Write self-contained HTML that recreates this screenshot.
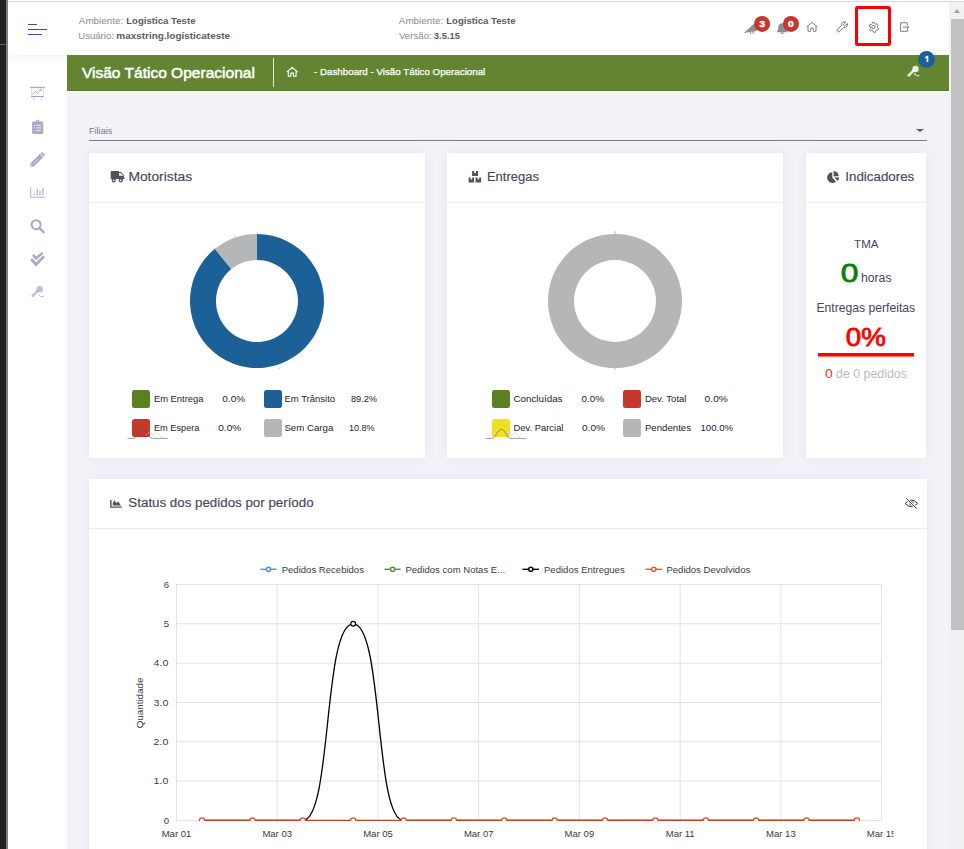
<!DOCTYPE html>
<html lang="pt-br">
<head>
<meta charset="utf-8">
<title>Visão Tático Operacional</title>
<style>
*{box-sizing:border-box;margin:0;padding:0}
html,body{width:964px;height:849px;overflow:hidden;background:#f2f3f8;font-family:"Liberation Sans",sans-serif;color:#48465b}
.abs{position:absolute}
.t{position:absolute;white-space:pre;line-height:1}
#leftstrip{left:0;top:0;width:6px;height:849px;background:#202124}
#leftline{left:6px;top:0;width:2px;height:849px;background:#7d7d7d}
#leftmark{left:0;top:44px;width:6px;height:1px;background:#5f6368}
#topline{left:8px;top:1px;width:956px;height:1px;background:#d9d9d9}
#header{left:8px;top:2px;width:941px;height:53px;background:#fff;box-shadow:0 0 12px rgba(82,63,105,.10)}
#sidebar{left:8px;top:55px;width:59px;height:794px;background:#fff}
#titlebar{left:67px;top:55px;width:882px;height:36px;background:#638532;border-bottom:1px solid #587a2b}
#titleline{left:67px;top:91px;width:882px;height:1px;background:#fafafc}
#toprow{left:8px;top:0;width:956px;height:1px;background:#fff}
#scrolltrack{left:949px;top:2px;width:15px;height:847px;background:#f1f1f1}
#scrollthumb{left:951px;top:19px;width:13px;height:611px;background:#c1c1c1}
.card{position:absolute;background:#fff;box-shadow:0 0 13px rgba(82,63,105,.07)}
.hr{position:absolute;height:1px;background:#ebedf2}
.sw{position:absolute;width:18px;height:18px;border-radius:2.5px}
.lg{position:absolute;white-space:pre;line-height:1;font-size:9.5px;color:#3a3a3a}
</style>
</head>
<body>
<div class="abs" id="sidebar"></div>
<div class="abs" id="header"></div>
<div class="abs" id="topline"></div>
<div class="abs" id="leftstrip"></div>
<div class="abs" id="leftline"></div>
<div class="abs" id="leftmark"></div>
<div class="abs" id="titlebar"></div>
<div class="abs" id="titleline"></div>
<div class="abs" id="toprow"></div>
<div class="abs" id="scrolltrack"></div>
<div class="abs" id="scrollthumb"></div>
<div class="abs" style="left:953.8px;top:8.7px;width:0;height:0;border-left:3.8px solid transparent;border-right:3.8px solid transparent;border-bottom:4.4px solid #a0a0a0"></div>

<!-- hamburger -->
<div class="abs" style="left:28px;top:24px;width:9px;height:1px;background:#3050a9"></div>
<div class="abs" style="left:28px;top:29px;width:19px;height:1px;background:#3050a9"></div>
<div class="abs" style="left:28px;top:34px;width:14px;height:1px;background:#3050a9"></div>

<!-- header texts -->

<!-- title bar -->
<div class="abs" style="left:273px;top:58px;width:1px;height:29px;background:#e4ead8"></div>

<!-- filiais -->
<div class="abs" style="left:89px;top:140px;width:838px;height:1px;background:#7e7e7e"></div>
<div class="abs" style="left:916px;top:129px;width:0;height:0;border-left:4px solid transparent;border-right:4px solid transparent;border-top:3.6px solid #5a5a5a"></div>

<!-- cards -->
<div class="card" style="left:89px;top:153px;width:336px;height:305px"></div>
<div class="card" style="left:447px;top:153px;width:336px;height:305px"></div>
<div class="card" style="left:806px;top:153px;width:120px;height:305px"></div>
<div class="card" style="left:89px;top:479px;width:838px;height:380px"></div>
<div class="hr" style="left:89px;top:202px;width:336px"></div>
<div class="hr" style="left:447px;top:202px;width:336px"></div>
<div class="hr" style="left:806px;top:202px;width:120px"></div>
<div class="hr" style="left:89px;top:528px;width:838px"></div>



<svg class="abs" style="left:0;top:0" width="964" height="849" viewBox="0 0 964 849" font-family="Liberation Sans, sans-serif">
  <text x="78.80" y="23.80" font-size="9.9" fill="#8c8c8c" textLength="44.50" lengthAdjust="spacingAndGlyphs">Ambiente:</text>
  <text x="126.21" y="23.80" font-size="9.8" fill="#5c5c5c" font-weight="bold" textLength="69.28" lengthAdjust="spacingAndGlyphs">Logistica Teste</text>
  <text x="78.30" y="38.90" font-size="9.9" fill="#8c8c8c" textLength="35.59" lengthAdjust="spacingAndGlyphs">Usuário:</text>
  <text x="116.31" y="38.90" font-size="9.8" fill="#5c5c5c" font-weight="bold" textLength="113.78" lengthAdjust="spacingAndGlyphs">maxstring.logisticateste</text>
  <text x="398.80" y="23.80" font-size="9.9" fill="#8c8c8c" textLength="44.50" lengthAdjust="spacingAndGlyphs">Ambiente:</text>
  <text x="446.21" y="23.80" font-size="9.8" fill="#5c5c5c" font-weight="bold" textLength="69.28" lengthAdjust="spacingAndGlyphs">Logistica Teste</text>
  <text x="398.90" y="38.90" font-size="9.9" fill="#8c8c8c" textLength="32.90" lengthAdjust="spacingAndGlyphs">Versão:</text>
  <text x="433.81" y="38.90" font-size="9.8" fill="#5c5c5c" font-weight="bold" textLength="26.18" lengthAdjust="spacingAndGlyphs">3.5.15</text>
  <text x="81.90" y="77.90" font-size="15" fill="#fff" stroke="#fff" stroke-width="0.5" textLength="173.00" lengthAdjust="spacingAndGlyphs">Visão Tático Operacional</text>
  <text x="314.02" y="75.20" font-size="9.6" fill="#fff" stroke="#fff" stroke-width="0.25" textLength="171.27" lengthAdjust="spacingAndGlyphs">- Dashboard - Visão Tático Operacional</text>
  <text x="89.03" y="134.00" font-size="9.4" fill="#7c7c86" textLength="23.25" lengthAdjust="spacingAndGlyphs">Filiais</text>
  <text x="128.43" y="180.60" font-size="12.5" fill="#48465b" stroke="#48465b" stroke-width="0.15" textLength="63.65" lengthAdjust="spacingAndGlyphs">Motoristas</text>
  <text x="486.98" y="180.60" font-size="12.5" fill="#48465b" stroke="#48465b" stroke-width="0.15" textLength="51.90" lengthAdjust="spacingAndGlyphs">Entregas</text>
  <text x="845.27" y="180.60" font-size="12.5" fill="#48465b" stroke="#48465b" stroke-width="0.15" textLength="69.00" lengthAdjust="spacingAndGlyphs">Indicadores</text>
  <text x="128.38" y="506.60" font-size="12.5" fill="#48465b" stroke="#48465b" stroke-width="0.15" textLength="185.20" lengthAdjust="spacingAndGlyphs">Status dos pedidos por período</text>
  <text x="153.93" y="402.00" font-size="9.4" fill="#23232f" textLength="49.55" lengthAdjust="spacingAndGlyphs">Em Entrega</text>
  <text x="222.33" y="402.00" font-size="9.4" fill="#23232f" textLength="22.75" lengthAdjust="spacingAndGlyphs">0.0%</text>
  <text x="284.43" y="402.00" font-size="9.4" fill="#23232f" textLength="50.65" lengthAdjust="spacingAndGlyphs">Em Trânsito</text>
  <text x="350.93" y="402.00" font-size="9.4" fill="#23232f" textLength="26.15" lengthAdjust="spacingAndGlyphs">89.2%</text>
  <text x="153.93" y="430.90" font-size="9.4" fill="#23232f" textLength="45.55" lengthAdjust="spacingAndGlyphs">Em Espera</text>
  <text x="218.23" y="430.90" font-size="9.4" fill="#23232f" textLength="23.05" lengthAdjust="spacingAndGlyphs">0.0%</text>
  <text x="284.43" y="430.90" font-size="9.4" fill="#23232f" textLength="48.85" lengthAdjust="spacingAndGlyphs">Sem Carga</text>
  <text x="348.93" y="430.90" font-size="9.4" fill="#23232f" textLength="25.75" lengthAdjust="spacingAndGlyphs">10.8%</text>
  <text x="513.53" y="402.00" font-size="9.4" fill="#23232f" textLength="48.95" lengthAdjust="spacingAndGlyphs">Concluídas</text>
  <text x="581.43" y="402.00" font-size="9.4" fill="#23232f" textLength="22.55" lengthAdjust="spacingAndGlyphs">0.0%</text>
  <text x="644.93" y="402.00" font-size="9.4" fill="#23232f" textLength="41.55" lengthAdjust="spacingAndGlyphs">Dev. Total</text>
  <text x="704.63" y="402.00" font-size="9.4" fill="#23232f" textLength="23.25" lengthAdjust="spacingAndGlyphs">0.0%</text>
  <text x="513.53" y="430.90" font-size="9.4" fill="#23232f" textLength="49.95" lengthAdjust="spacingAndGlyphs">Dev. Parcial</text>
  <text x="582.03" y="430.90" font-size="9.4" fill="#23232f" textLength="23.05" lengthAdjust="spacingAndGlyphs">0.0%</text>
  <text x="644.93" y="430.90" font-size="9.4" fill="#23232f" textLength="46.15" lengthAdjust="spacingAndGlyphs">Pendentes</text>
  <text x="700.43" y="430.90" font-size="9.4" fill="#23232f" textLength="32.65" lengthAdjust="spacingAndGlyphs">100.0%</text>
  <text x="854.07" y="247.90" font-size="11.5" fill="#48465b" textLength="24.43" lengthAdjust="spacingAndGlyphs">TMA</text>
  <text x="840.71" y="282.00" font-size="25.5" fill="#0b7d0b" stroke="#0b7d0b" stroke-width="0.8" textLength="17.68" lengthAdjust="spacingAndGlyphs">0</text>
  <text x="860.88" y="282.00" font-size="12.3" fill="#48465b" textLength="30.68" lengthAdjust="spacingAndGlyphs">horas</text>
  <text x="816.39" y="312.10" font-size="12.2" fill="#48465b" textLength="98.78" lengthAdjust="spacingAndGlyphs">Entregas perfeitas</text>
  <text x="845.81" y="346.00" font-size="25.5" fill="#f00" stroke="#f00" stroke-width="0.8" textLength="40.07" lengthAdjust="spacingAndGlyphs">0%</text>
  <text x="825.10" y="377.80" font-size="12" fill="#f33" textLength="7.76" lengthAdjust="spacingAndGlyphs">0</text>
  <text x="836.00" y="377.80" font-size="12" fill="#b9b9c6" textLength="70.86" lengthAdjust="spacingAndGlyphs">de 0 pedidos</text>
</svg>

<!-- donuts -->
<svg class="abs" style="left:0;top:0" width="964" height="849" viewBox="0 0 964 849">
  <path d="M257.00 234.00A67 67 0 1 1 214.94 248.84L231.26 269.08A41 41 0 1 0 257.00 260.00Z" fill="#1b6096"/>
  <path d="M214.94 248.84A67 67 0 0 1 257.00 234.00L257.00 260.00A41 41 0 0 0 231.26 269.08Z" fill="#b5b6b7"/>
  <path d="M615 234a67 67 0 1 1 -0.01 0ZM615 260a41 41 0 1 0 0.01 0Z" fill="#b5b6b7" fill-rule="evenodd"/>
  <path d="M615 231v3M615 368v2" stroke="#888" stroke-width=".6" fill="none"/>
  <path d="M257 232v2M213.7 247.3l1.2 1.5M234.5 235.5l.6 1.8M279 367.5l.5 1.8" stroke="#aaa" stroke-width=".6" fill="none"/>
</svg>

<!-- legend card 1 -->
<div class="sw" style="left:132px;top:390px;background:#5a801f"></div>
<div class="sw" style="left:263.5px;top:390px;background:#1b6096"></div>
<div class="sw" style="left:132px;top:419px;background:#c5392d"></div>
<div class="sw" style="left:263.5px;top:419px;background:#b5b6b7"></div>

<!-- legend card 2 -->
<div class="sw" style="left:492px;top:390px;background:#5a801f"></div>
<div class="sw" style="left:623.3px;top:390px;background:#c5392d"></div>
<div class="sw" style="left:492px;top:419px;background:#f0e022"></div>
<div class="sw" style="left:623.3px;top:419px;background:#b5b6b7"></div>

<!-- indicadores -->
<div class="abs" style="left:818px;top:353px;width:96px;height:3px;background:#f00;box-shadow:0 1px 0 rgba(255,40,40,.55),0 2px 1px rgba(0,0,0,.12)"></div>


<!-- chart -->
<svg class="abs" style="left:0;top:0" width="964" height="849" viewBox="0 0 964 849" font-family="Liberation Sans, sans-serif" font-size="9.5" fill="#373d3f">
  <defs><clipPath id="cp"><rect x="170" y="578" width="716" height="243"/></clipPath><clipPath id="cx"><rect x="100" y="822" width="793.5" height="27"/></clipPath></defs>
  <path d="M176.5 584V821M277.2 584V821M378.0 584V821M478.7 584V821M579.4 584V821M680.2 584V821M780.9 584V821M881.6 584V821M176 584.5H882.2M176 623.8H882.2M176 663.2H882.2M176 702.5H882.2M176 741.8H882.2M176 781.1H882.2M176 820.5H882.2" stroke="#e3e3e3" stroke-width="1" fill="none"/>
  <g clip-path="url(#cp)">
    <path d="M202.1 820.45H302.8C332.1 820.45 323.0 623.8 353.2 623.8C383.4 623.8 374.4 820.45 403.6 820.45H856.9" stroke="#000" stroke-width="1.3" fill="none"/>
    <path d="M202.1 820.45H856.9" stroke="#b5432a" stroke-width="1.3" fill="none"/>
    <g fill="#fff" stroke="#e8472a" stroke-width="1.2"><circle cx="202.1" cy="820.45" r="2.6"/><circle cx="252.5" cy="820.45" r="2.6"/><circle cx="302.8" cy="820.45" r="2.6"/><circle cx="353.2" cy="820.45" r="2.6"/><circle cx="403.6" cy="820.45" r="2.6"/><circle cx="453.9" cy="820.45" r="2.6"/><circle cx="504.3" cy="820.45" r="2.6"/><circle cx="554.7" cy="820.45" r="2.6"/><circle cx="605.1" cy="820.45" r="2.6"/><circle cx="655.4" cy="820.45" r="2.6"/><circle cx="705.8" cy="820.45" r="2.6"/><circle cx="756.2" cy="820.45" r="2.6"/><circle cx="806.5" cy="820.45" r="2.6"/><circle cx="856.9" cy="820.45" r="2.6"/></g>
  </g>
  <circle cx="353.2" cy="623.8" r="2.4" fill="#fff" stroke="#000" stroke-width="1.2"/>
  <g font-size="9.6"><text x="169.2" y="587.6" text-anchor="end">6</text><text x="169.2" y="626.9" text-anchor="end">5</text><text x="153.6" y="666.3" textLength="14.8" lengthAdjust="spacingAndGlyphs">4.0</text><text x="153.6" y="705.6" textLength="14.8" lengthAdjust="spacingAndGlyphs">3.0</text><text x="153.6" y="744.9" textLength="14.8" lengthAdjust="spacingAndGlyphs">2.0</text><text x="153.6" y="784.2" textLength="14.8" lengthAdjust="spacingAndGlyphs">1.0</text><text x="169.2" y="823.6" text-anchor="end">0</text></g>
  <g clip-path="url(#cx)"><text x="176.5" y="837" text-anchor="middle">Mar 01</text><text x="277.2" y="837" text-anchor="middle">Mar 03</text><text x="378.0" y="837" text-anchor="middle">Mar 05</text><text x="478.7" y="837" text-anchor="middle">Mar 07</text><text x="579.4" y="837" text-anchor="middle">Mar 09</text><text x="680.2" y="837" text-anchor="middle">Mar 11</text><text x="780.9" y="837" text-anchor="middle">Mar 13</text><text x="881.6" y="837" text-anchor="middle">Mar 15</text></g>
  <text transform="translate(143.2,703) rotate(-90)" text-anchor="middle" font-size="9.8">Quantidade</text>
  <!-- legend -->
  <g stroke-width="1.4" fill="#fff">
    <g stroke="#3e9bd8"><path d="M260.4 569.3h16.2"/><circle cx="268.5" cy="569.3" r="2.1"/></g>
    <g stroke="#5e8a2e"><path d="M384.500 569.3h16.2"/><circle cx="392.6" cy="569.3" r="2.1"/></g>
    <g stroke="#000"><path d="M522.5 569.3h16.5"/><circle cx="530.8" cy="569.3" r="2.1"/></g>
    <g stroke="#e8552f"><path d="M645.5 569.3h16.5"/><circle cx="653.8" cy="569.3" r="2.1"/></g>
  </g>
  <g font-size="9.55">
    <text x="281.7" y="572.6">Pedidos Recebidos</text>
    <text x="405.4" y="572.6">Pedidos com Notas E...</text>
    <text x="544" y="572.6">Pedidos Entregues</text>
    <text x="666.4" y="572.6">Pedidos Devolvidos</text>
  </g>
</svg>


<!-- icons -->
<svg class="abs" style="left:0;top:0" width="964" height="849" viewBox="0 0 964 849" font-family="Liberation Sans, sans-serif">
  <!-- sidebar icons -->
  <g stroke="#a7aac6" fill="none" stroke-width=".9">
    <path d="M30.1 87.4h14.8M31.1 96.5h12.8" stroke-width="1" stroke="#9fa2be"/>
    <path d="M37.4 85.8v1.4M31.7 87.4v9.1M43.3 87.4v9.1" opacity=".5"/>
    <path d="M33.8 97l-.2 2.9M41.2 97l.2 2.9" opacity=".65"/>
    <path d="M32.4 94.5l3.1-3.3 2 2.3 3.5-3.900M39.4 89.3l2-.2-.1 2" stroke-width=".9"/>
    <path d="M30.7 187.3V197.3H44.8"/>
    <path d="M34.1 193.4v1.9M37.2 189.1v6.2M40 190.4v4.9M42.9 188v7.3" stroke-width="1.1"/>
    <circle cx="36.1" cy="224.7" r="4.5" stroke-width="2.1"/>
    <path d="M39.8 228.4l3.8 3.8" stroke-width="2.5" stroke-linecap="round"/>
    <path d="M32.8 254.9l3.3 3.4 6.6-5.4" stroke-width="2.5"/>
    <path d="M31.2 259.3l4.9 5.2 7.9-8.1" stroke-width="2.7"/>
    <path d="M32 296.7l6-6" stroke-width="2.4" opacity=".75"/>
    <circle cx="39.7" cy="289.3" r="3.2" fill="#a7aac6" stroke="none" opacity=".75"/>
    <path d="M38.3 294.2l1.7 1.5M40.6 296.5h3" stroke-width="1" opacity=".8"/>
  </g>
  <g fill="#a7aac6">
    <rect x="32.1" y="121.4" width="11.1" height="12.5" rx="1.3"/>
    <circle cx="37.65" cy="121.3" r="1.7"/>
    <path d="M30 167.2l.6-4 9.200-9.200 3.300 3.300-9.200 9.200zM40.400 153.400l.7-.7a1.200 1.200 0 0 1 1.700 0l1.600 1.600a1.200 1.200 0 0 1 0 1.700l-.7.7z"/><path d="M33.700 163.600l5-5" stroke="#e6e8f2" stroke-width=".7" fill="none"/><path d="M30.900 164.500l1.800 1.800-2.300.6z" fill="#e1e3ef"/>
  </g>
  <g stroke="#eceef6" stroke-width="1" fill="none">
    <path d="M34.2 125.3h1M36.4 125.3h4.8M34.2 127.9h1M36.4 127.9h4.8M34.2 130.5h1M36.4 130.5h4.8"/>
  </g>
  <circle cx="37.65" cy="121.1" r=".6" fill="#fff"/>

  <!-- header icons -->
  <g fill="#8e8e8e">
    <path d="M743.8 33l9.600-8.800q3-2.400 6.400-.6l1.400 2.400-2.400.4q-.2 3.600-3.800 5l-3.600.4-4 .6z"/>
    <path d="M750 31l1.100 3.200M752.400 30.800l1.100 3.200" stroke="#8e8e8e" stroke-width="1" fill="none"/>
    <path d="M782.2 23.200c-3 0-4 2.500-4 4.800 0 1.900-.5 2.800-1.700 3.900h11.400c-1.200-1.100-1.700-2-1.700-3.900 0-2.300-1-4.800-4-4.800zM776.500 31.900h11.400v.4h-11.400z"/>
    <path d="M780.6 32.500h3.200a1.600 1.500 0 0 1-3.200 0z"/>
  </g>
  <circle cx="762.1" cy="23.900" r="8" fill="#c4372c"/>
  <circle cx="791" cy="23.900" r="8" fill="#c4372c"/>
  <g fill="#fff" stroke="#fff" stroke-width=".35" font-weight="bold" font-size="9.3" text-anchor="middle">
    <text transform="translate(762.1 27.200) scale(1.12 1)">3</text>
    <text transform="translate(791 27.200) scale(1.12 1)">0</text>
  </g>
  <g stroke="#6f6f6f" stroke-width=".9" fill="none" stroke-linejoin="round">
    <path d="M806.400 27.200l5.600-4.900 5.600 4.900M808 26v5.300h2.700v-3.300h2.600v3.300h2.700v-5.300"/>
    <path transform="translate(837.51 31.33) rotate(-43.5)" d="M1.5 -1.5H7.3A2.9 2.9 0 0 1 12.46 -1.1H9.9A1.1 1.1 0 0 0 9.9 1.1H12.46A2.9 2.9 0 0 1 7.3 1.5H1.5A1.5 1.5 0 0 1 1.5 -1.5Z"/>
    <circle cx="873.400" cy="27" r="1.700"/>
    <path d="M872.500 22.400h1.800l.3 1.300 1.200.6 1.300-.6 1.100 1.500-.8 1 .1 1.400 1.200.8-.7 1.700-1.400-.1-1 .9-.1 1.400h-1.900l-.4-1.300-1.200-.6-1.300.5-1.100-1.500.8-1.100-.2-1.300-1.100-.8.700-1.700 1.400.1 1-.9z"/>
    <path stroke-linejoin="miter" d="M907.400 25.200v-2.400h-6.800v8.500h6.800v-2.400M903 27.100h5.600M907 25.400l1.700 1.700-1.700 1.700"/>
  </g>
  <rect x="856.500" y="7.400" width="33" height="37.200" rx="1" fill="none" stroke="#f00" stroke-width="3"/>

  <!-- titlebar icons -->
  <g stroke="#fff" stroke-width="1.100" fill="none" stroke-linejoin="round">
    <path d="M286.700 72.200l5.500-4.900 5.500 4.900M288.300 71v5.300h2.600v-3.200h2.600v3.200h2.600v-5.300"/>
  </g>
  <g stroke="#fff" fill="none">
    <path d="M908 76.200l6-6" stroke-width="2.600" opacity=".85"/>
    <circle cx="915.500" cy="69" r="3.200" fill="#fff" stroke="none" opacity=".85"/>
    <path d="M914.300 73.500l1.700 1.600M916.400 75.800h3" stroke-width="1.100"/>
  </g>
  <circle cx="926.500" cy="59.400" r="8.400" fill="#1b6096"/>
  <path d="M924.7 57.4l2.2-1.700h1.400v6.300h-1.700v-4.300l-1.300.9z" fill="#fff"/>

  <!-- card icons -->
  <g fill="#50535f">
    <path d="M110.700 171h7.700a.6.600 0 0 1 .6.600v.4h1.900l3 3v2.500h.6v1.600h-1.500a2 2 0 0 1-.2 1h-3.700a2 2 0 0 1-.2-1h-3a2 2 0 0 1-.2 1h-3.700a2 2 0 0 1-.2-1h-.5a.6.600 0 0 1-.6-.6v-6.900a.6.600 0 0 1 .6-.6z"/>
    <circle cx="113.700" cy="180.400" r="2"/><circle cx="120.800" cy="180.400" r="2"/>
    <path d="M472.100 171.100h2.100v2h1.800v-2h2.100v4.900h-6zM468.600 177.500h2v2h1.500v-2h2v4.900h-5.500zM475.600 177.500h2v2h1.500v-2h2v4.900h-5.500z"/>
    <path d="M832.300 172.300v5.400l3.700 3.700a5.300 5.300 0 1 1-3.700-9.100z"/>
    <path d="M833.600 171a5.400 5.400 0 0 1 5.200 5.300h-5.200z"/>
    <path d="M834.200 177.600h5a5.400 5.400 0 0 1-1.600 3.400z"/>
    <path d="M110.200 499.900h1.400v6.500h10.200v1.400h-11.600z"/>
    <path d="M112.800 505.500v-2.600l1.600-2.600 1.900 2.600 2-1.300 2.600 3.900z"/>
  </g>
  <g fill="#fff"><circle cx="113.700" cy="180.400" r=".8"/><circle cx="120.800" cy="180.400" r=".8"/><path d="M119.100 172.900h1.500l2.300 2.300v.5h-3.800z"/></g>
  <g stroke="#333" stroke-width="1" fill="none">
    <path d="M905.2 503.4q6.200-6.600 12.400 0q-6.200 6.600-12.400 0z"/>
    <circle cx="911.4" cy="503.4" r="1.700"/>
    <path d="M906.1 498.300l10.700 10.300" stroke="#fff" stroke-width="2.400"/>
    <path d="M906.1 498.300l10.700 10.300" stroke="#45322c" stroke-width=".95"/>
  </g>
  <!-- legend artefacts -->
  <g transform="translate(0 0)" fill="none"><path d="M146.3 435.2L149.4 431.8L153.6 435.1L157.2 432.6L162.1 438.4" stroke="#d2d2d2" stroke-width=".8"/><path d="M127.4 438.4H133C137.5 438.4 139.5 429.4 143.2 429.4C147 429.4 148.5 438.4 152.5 438.4H167.8" stroke="#4a4a4a" stroke-width=".9" opacity=".6"/></g>
  <g transform="translate(358.2 0)" fill="none"><path d="M146.3 435.2L149.4 431.8L153.6 435.1L157.2 432.6L162.1 438.4" stroke="#d2d2d2" stroke-width=".8"/><path d="M127.4 438.4H133C137.5 438.4 139.5 429.4 143.2 429.4C147 429.4 148.5 438.4 152.5 438.4H167.8" stroke="#4a4a4a" stroke-width=".9" opacity=".6"/></g>
</svg>

</body>
</html>
